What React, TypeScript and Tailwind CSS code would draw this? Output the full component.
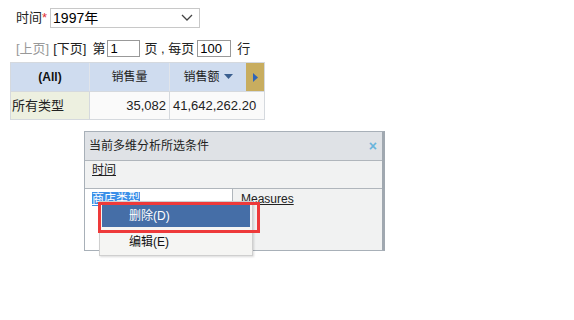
import React from 'react'

const font = "font-['Liberation_Sans','Noto_Sans_CJK_SC',sans-serif]"

const App = () => {
    return (
        <div className={`relative h-[320px] w-[574px] bg-white text-[13px] text-[#222] ${font}`}>
            {/* filter row */}
            <div className="flex items-center pt-[8px] pl-[16px]">
                <span className="leading-[20px]">时间</span>
                <span className="mr-[3px] leading-[20px] text-[#e03030]">*</span>
                <div className="flex h-[20px] w-[150px] items-center justify-between border border-[#c8c8c8] pr-[6px] pl-[2px]">
                    <span className="text-[14px] leading-[18px] text-black">1997年</span>
                    <svg width="12" height="8" viewBox="0 0 12 8">
                        <path d="M1 1 L6 6 L11 1" fill="none" stroke="#444" strokeWidth="1.3" />
                    </svg>
                </div>
            </div>

            {/* paging row */}
            <div className="mt-[12px] flex items-center pl-[16px] leading-[16px]">
                <span className="text-[#999]">[上页]</span>
                <span className="ml-[4px]">[下页]</span>
                <span className="ml-[6px]">第</span>
                <div className="ml-[2px] h-[17px] w-[33px] border border-[#999] pl-[2px] text-[13px] leading-[15px] text-black">1</div>
                <span className="ml-[4px]">页 , 每页</span>
                <div className="ml-[3px] h-[17px] w-[34px] border border-[#999] pl-[2px] text-[13px] leading-[15px] text-black">100</div>
                <span className="ml-[6px]">行</span>
            </div>

            {/* pivot table */}
            <div className="mt-[5px] ml-[10px] flex w-[255px] flex-col border border-[#d5d9de]">
                <div className="flex h-[28px] bg-[#cfdcef] text-[12px]">
                    <div className="flex w-[79px] items-center justify-center border-r border-[#e0e4ea] font-bold text-[#111]">(All)</div>
                    <div className="flex w-[80px] items-center justify-center border-r border-[#e0e4ea]">销售量</div>
                    <div className="flex w-[76px] items-center justify-center gap-[4px]">
                        <span>销售额</span>
                        <svg width="9" height="6" viewBox="0 0 9 6">
                            <path d="M0 0 H9 L4.5 5 Z" fill="#3a5f8f" />
                        </svg>
                    </div>
                    <div className="flex w-[18px] items-center justify-center bg-[#c8ad5f]">
                        <svg width="5" height="9" viewBox="0 0 5 9">
                            <path d="M0 0 L5 4.5 L0 9 Z" fill="#2e64b8" />
                        </svg>
                    </div>
                </div>
                <div className="flex h-[28px] border-t border-[#d5d9de] text-[13px]">
                    <div className="flex w-[79px] items-center border-r border-[#d5d9de] bg-[#edf0e0] pl-[1px]">所有类型</div>
                    <div className="flex w-[80px] items-center justify-end border-r border-[#d5d9de] bg-[#fafafa] pr-[3px]">35,082</div>
                    <div className="flex w-[94px] items-center bg-[#fafafa] pl-[3px]">41,642,262.20</div>
                </div>
            </div>

            {/* conditions dialog */}
            <div className="absolute top-[131px] left-[84px] flex h-[120px] w-[301px] flex-col border border-[#a8b0b8] border-r-[3px] border-r-[#a0a8b0] bg-[#f1f2f2] text-[12px]">
                <div className="flex h-[29px] items-center justify-between border-b border-[#b0b6bc] bg-[#dfe2e6] pr-[5px] pl-[4px]">
                    <span className="text-[12px] text-[#222]">当前多维分析所选条件</span>
                    <span className="text-[14px] leading-none font-bold text-[#68b4dc]">×</span>
                </div>
                <div className="h-[28px] border-b border-[#b0b6bc] pl-[7px] leading-[18px]">
                    <span className="underline">时间</span>
                </div>
                <div className="flex flex-1">
                    <div className="w-[148px] border-r border-[#b0b6bc] bg-white pt-[1px] pl-[7px]">
                        <span className="bg-[#3b8fe8] leading-[14px] text-white underline">商店类型</span>
                    </div>
                    <div className="flex-1 pt-[1px] pl-[8px]">
                        <span className="underline">Measures</span>
                    </div>
                </div>
            </div>

            {/* context menu */}
            <div className="absolute top-[201px] left-[99px] flex h-[55px] w-[154px] flex-col border border-[#cfcfcf] bg-[#f5f5f3] p-[2px] text-[12px] shadow-[1px_1px_2px_rgba(0,0,0,0.15)]">
                <div className="flex h-[24px] items-center bg-[#456ea7] pl-[27px] text-white">删除(D)</div>
                <div className="flex h-[26px] items-center pt-[3px] pl-[27px] text-[#111]">编辑(E)</div>
            </div>
            <div className="absolute top-[202px] left-[98px] h-[31px] w-[162px] border-[3px] border-[#ee3a3a]" />
        </div>
    )
}

export default App
